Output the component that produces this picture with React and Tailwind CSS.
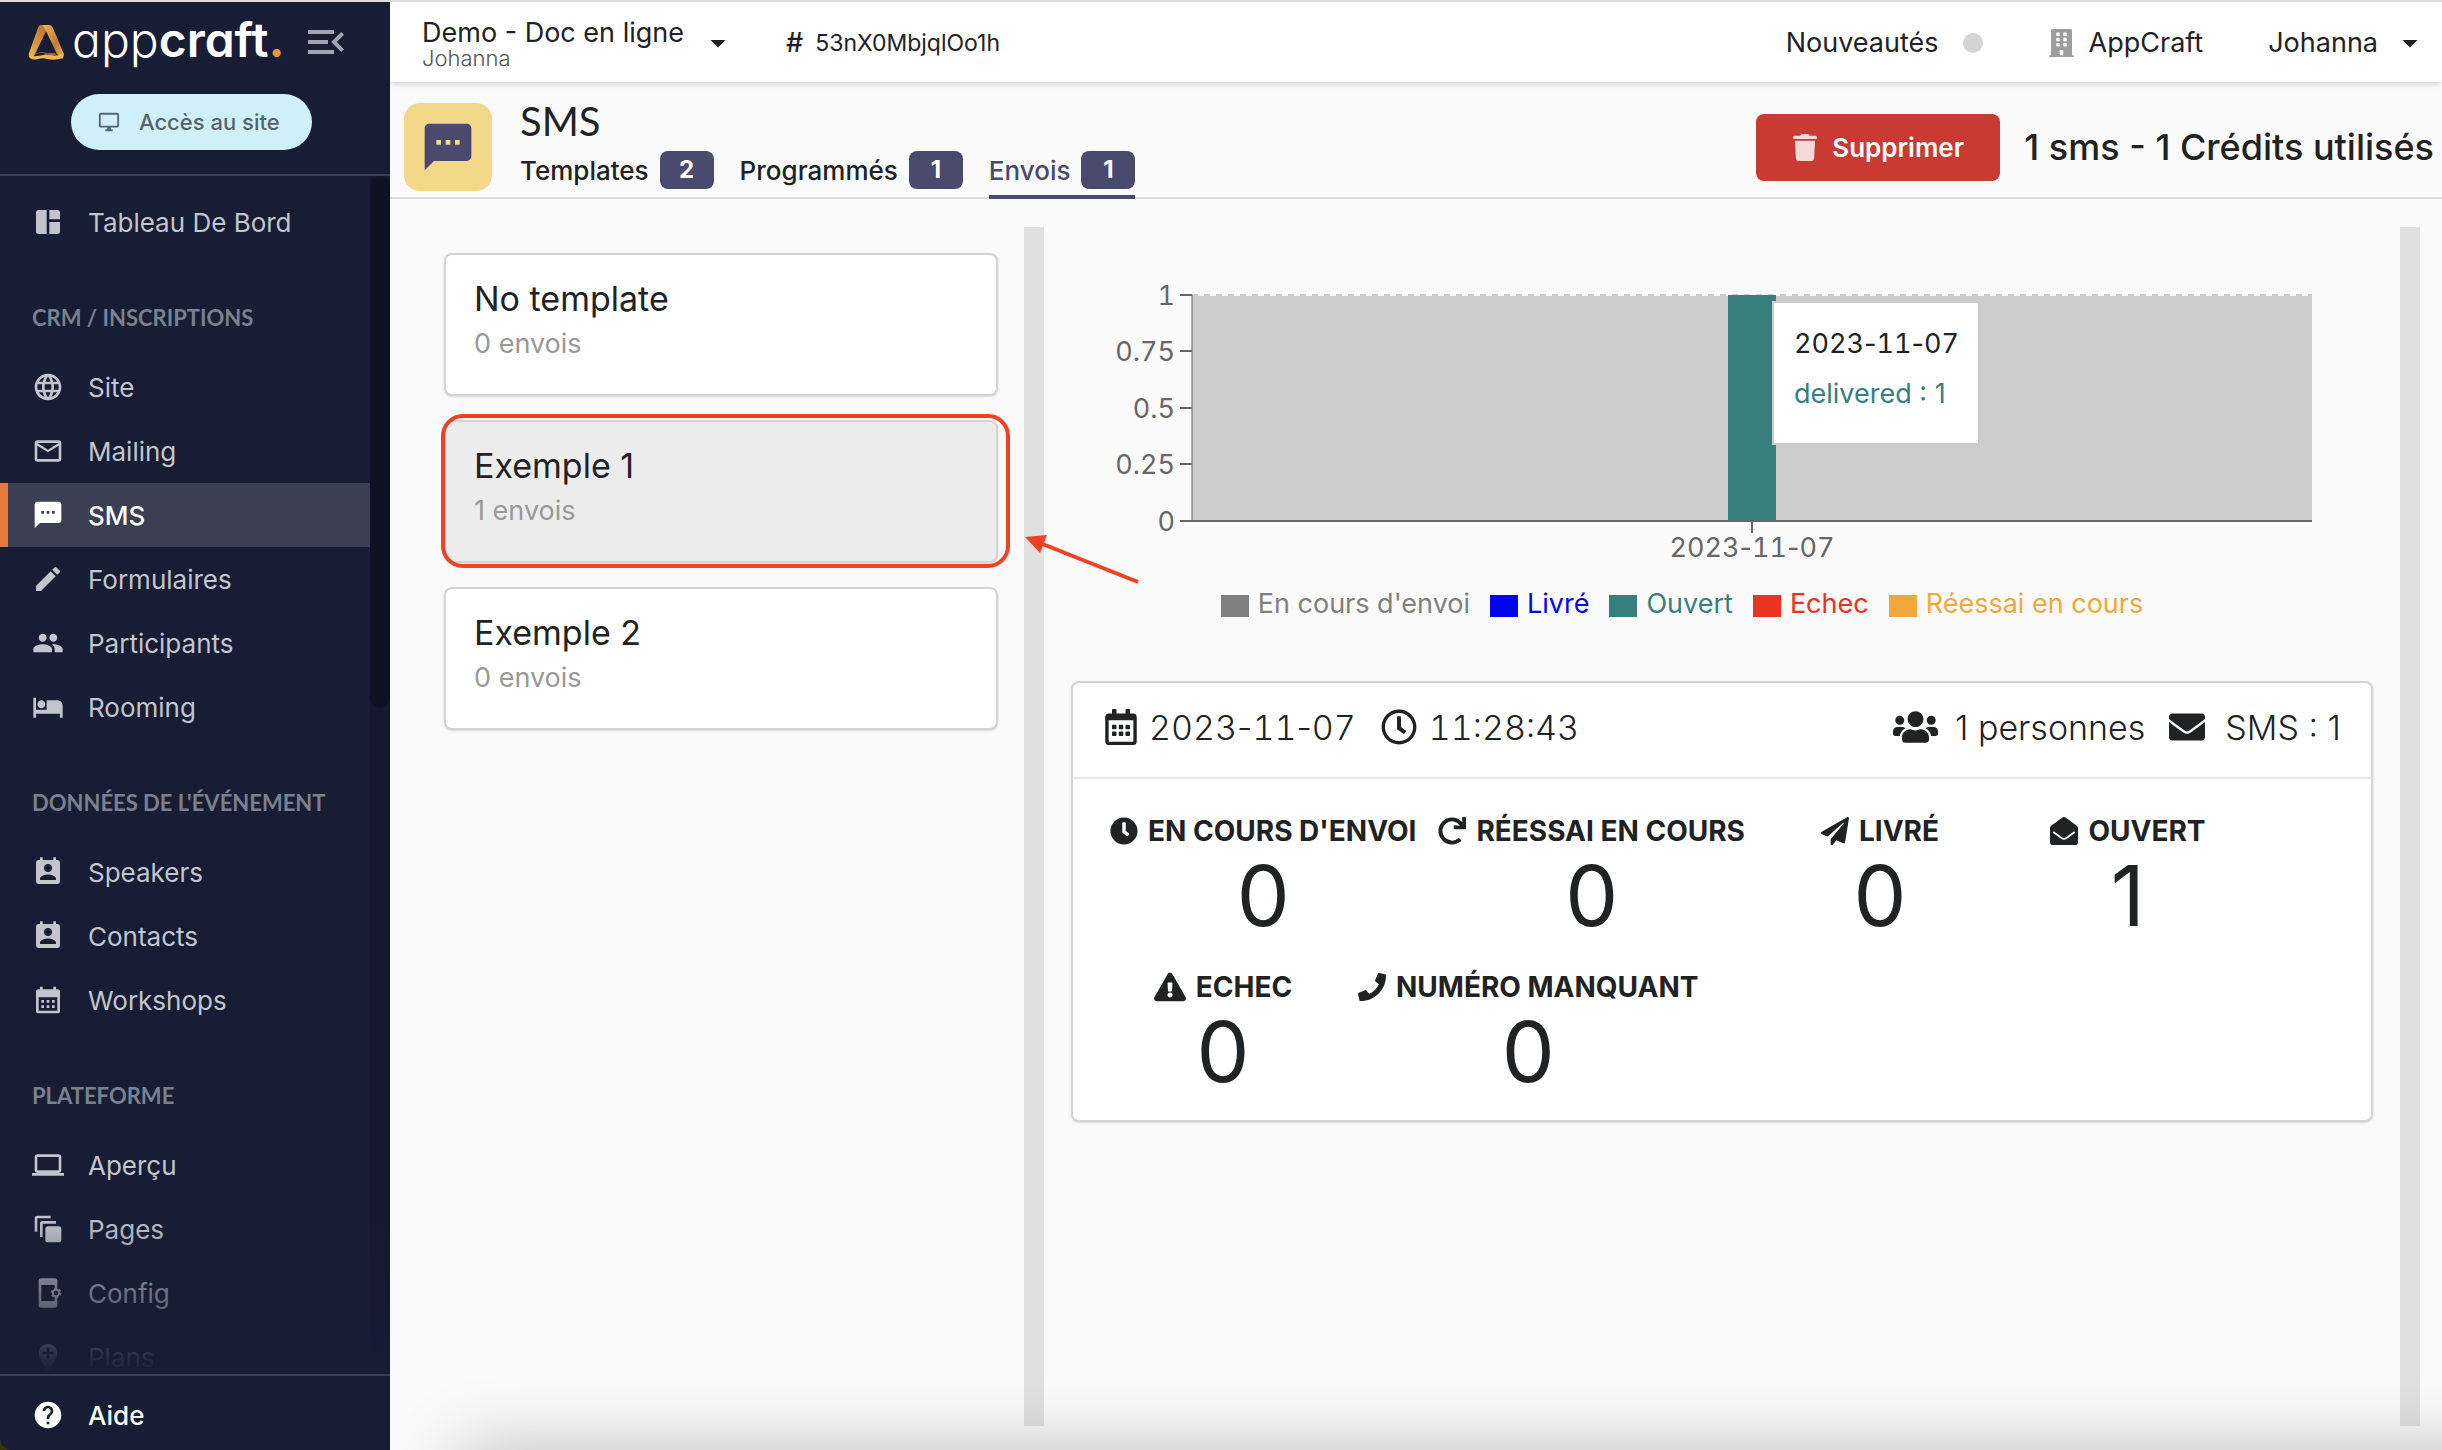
import {
  MdHotel, MdCreate, MdHelp, MdLaptop, MdMailOutline, MdMenuOpen, MdOutlineDesktopWindows,
  MdPeople, MdSms, MdLanguage, MdAddLocation, MdArrowDropDown,
} from "react-icons/md";
import {
  FaBuilding, FaClock, FaEnvelope, FaEnvelopeOpen, FaExclamationTriangle, FaPaperPlane,
  FaPhone, FaRegCalendarAlt, FaRegClock, FaTrash, FaUsers, FaRedo,
} from "react-icons/fa";

function DashboardIcon({ className }) {
  return (
    <svg viewBox="0 0 24 24" fill="currentColor" className={className}>
      <path d="M11 21H5a2 2 0 0 1-2-2V5a2 2 0 0 1 2-2h6v18zM13 21h6a2 2 0 0 0 2-2v-7h-8v9zM21 10V5a2 2 0 0 0-2-2h-6v7h8z" />
    </svg>
  );
}

function BadgeIcon({ className }) {
  return (
    <svg viewBox="0 0 24 24" fill="currentColor" fillRule="evenodd" className={className}>
      <path d="M19 3h-1V1h-2v2H8V1H6v2H5a2 2 0 0 0-2 2v14a2 2 0 0 0 2 2h14a2 2 0 0 0 2-2V5a2 2 0 0 0-2-2zm-7 3a3 3 0 1 1 0 6 3 3 0 0 1 0-6zm6 12H6v-1c0-2 4-3.100 6-3.100s6 1.100 6 3.100v1z" />
    </svg>
  );
}

function WorkshopIcon({ className }) {
  return (
    <svg viewBox="0 0 24 24" fill="currentColor" fillRule="evenodd" className={className}>
      <path d="M19 4h-1V2h-2v2H8V2H6v2H5a2 2 0 0 0-2 2v14a2 2 0 0 0 2 2h14a2 2 0 0 0 2-2V6a2 2 0 0 0-2-2zm0 16H5V10h14v10z" />
      <path d="M7 12h2v2H7zM11 12h2v2h-2zM15 12h2v2h-2zM7 16h2v2H7zM11 16h2v2h-2zM15 16h2v2h-2z" />
    </svg>
  );
}

function PagesIcon({ className }) {
  return (
    <svg viewBox="0 0 24 24" fill="currentColor" className={className}>
      <path d="M2 14V4a2 2 0 0 1 2-2h10v2H4v10zM6 18V8a2 2 0 0 1 2-2h10v2H8v10z" />
      <rect x="10" y="10" width="12" height="12" rx="2" />
    </svg>
  );
}

function ConfigIcon({ className }) {
  return (
    <svg viewBox="0 0 24 24" fill="currentColor" className={className}>
      <path d="M7 1a2 2 0 0 0-2 2v18a2 2 0 0 0 2 2h10a2 2 0 0 0 2-2v-3H7V6h12V3a2 2 0 0 0-2-2z" />
      <path d="M17 6h2v3h-2zM17 15h2v3h-2z" />
      <circle cx="18" cy="12" r="2.400" fill="none" stroke="currentColor" strokeWidth="1.500" />
      <circle cx="18" cy="12" r="3.400" fill="none" stroke="currentColor" strokeWidth="1.200" strokeDasharray="1.800 1.760" />
    </svg>
  );
}

function Logo() {
  return (
    <span className="flex items-center gap-2">
      <svg viewBox="0 0 36 36" className="h-9 w-9">
        <defs>
          <linearGradient id="leg-left" x1="1" y1="0" x2="0" y2="1">
            <stop offset="0" stopColor="#b06a2c" />
            <stop offset="1" stopColor="#f2b650" />
          </linearGradient>
          <linearGradient id="leg-right" x1="0" y1="0" x2="1" y2="1">
            <stop offset="0" stopColor="#f2b650" />
            <stop offset="0.600" stopColor="#c27c35" />
            <stop offset="1" stopColor="#f2b650" />
          </linearGradient>
        </defs>
        <path d="M13 1h8L8 28c-1 3-3 4-3 6-3 1-5-1-4-5L10 4c1-2 1-3 3-3z" fill="url(#leg-left)" />
        <path d="M14 1h7c2 0 3 1 4 3l10 24c1 3 1 5-1 7l-5-5L17 5z" fill="url(#leg-right)" />
        <path d="M1 31c1 5 5 5 9 4 3-1 6-1 9 0 5 1 11 1 15-1 2-2 2-4 1-6-3 4-7 4-11 3-3-1-6-1-9 0-5 1-10 2-14 0z" fill="#f2b650" />
        <path d="M7 31c4-3 9-3 12 0 4 0 7 1 10-1-4-2-8 0-11-1-4-2-9-1-11 2z" fill="#a8652c" />
      </svg>
      <span className="pb-1 text-[48px] leading-[50px] font-light text-white [font-feature-settings:'cv11']">
        app<span className="font-semibold">craft</span><span className="font-bold text-[#e79a35]">.</span>
      </span>
    </span>
  );
}

const sections = [
  { items: [{ label: "Tableau De Bord", icon: DashboardIcon }] },
  {
    title: "CRM / INSCRIPTIONS",
    items: [
      { label: "Site", icon: MdLanguage },
      { label: "Mailing", icon: MdMailOutline },
      { label: "SMS", icon: MdSms, active: true },
      { label: "Formulaires", icon: MdCreate },
      { label: "Participants", icon: MdPeople },
      { label: "Rooming", icon: MdHotel },
    ],
  },
  {
    title: "DONNÉES DE L'ÉVÉNEMENT",
    items: [
      { label: "Speakers", icon: BadgeIcon },
      { label: "Contacts", icon: BadgeIcon },
      { label: "Workshops", icon: WorkshopIcon },
    ],
  },
  {
    title: "PLATEFORME",
    items: [
      { label: "Aperçu", icon: MdLaptop },
      { label: "Pages", icon: PagesIcon },
      { label: "Config", icon: ConfigIcon },
      { label: "Plans", icon: MdAddLocation },
    ],
  },
];

function NavItem({ label, icon: Icon, active }) {
  return (
    <a
      href="#"
      className={
        active
          ? "flex h-16 items-center gap-6 border-l-8 border-[#e57a3a] bg-[#3a3f54] pl-6 text-[26px] font-medium text-white"
          : "flex h-16 items-center gap-6 pl-8 text-[26px] text-[#c3c5cd]"
      }
    >
      <Icon className="h-8 w-8 shrink-0" />
      {label}
    </a>
  );
}

function Sidebar() {
  return (
    <aside className="flex w-[390px] shrink-0 flex-col rounded-bl-xl bg-[#161d35]">
      <div className="flex h-[174px] shrink-0 flex-col border-b-2 border-[#3a3f54]">
        <div className="flex h-20 items-center justify-between pr-10 pl-7">
          <Logo />
          <button type="button" aria-label="Replier le menu" className="text-[#a1a5b1]">
            <MdMenuOpen className="h-12 w-12" />
          </button>
        </div>
        <button
          type="button"
          className="ml-[71px] mt-3 flex h-14 w-[241px] items-center gap-[19px] rounded-full bg-[#cff0fb] pl-[27px] text-[22px] font-medium text-[#566466]"
        >
          <MdOutlineDesktopWindows className="h-[22px] w-[22px]" />
          Accès au site
        </button>
      </div>
      <div className="relative flex min-h-0 flex-1 overflow-hidden">
        <nav className="flex-1 pt-[14px]">
          {sections.map((section) => (
            <div key={section.items[0].label}>
              {section.title && (
                <h2 className="flex h-[101px] items-center pt-[26px] pl-8 font-[Lato] text-[22px] font-bold text-[#7a808f]">
                  {section.title}
                </h2>
              )}
              {section.items.map((item) => (
                <NavItem key={item.label} {...item} />
              ))}
            </div>
          ))}
        </nav>
        <div className="w-5 bg-[#151831]">
          <div className="h-[532px] rounded-full bg-[#0d1321]" />
        </div>
        <div className="pointer-events-none absolute inset-x-0 bottom-0 h-40 bg-linear-to-b from-transparent to-[#161d35]" />
      </div>
      <a href="#" className="flex h-[76px] shrink-0 items-center gap-6 border-t-2 border-[#3a3f54] pt-1 pl-8 text-[26px] font-medium text-white">
        <MdHelp className="h-8 w-8" />
        Aide
      </a>
    </aside>
  );
}

function TopBar() {
  return (
    <header className="z-10 flex h-20 shrink-0 items-center bg-white pt-[2px] pr-[14px] pl-8 text-[27px] shadow-md">
      <button type="button" className="flex items-center gap-4 text-left">
        <span className="flex flex-col">
          <span className="leading-[30px]">Demo - Doc en ligne</span>
          <span className="text-[22px] leading-[20px] font-light text-[#555]">Johanna</span>
        </span>
        <MdArrowDropDown className="h-9 w-9" />
      </button>
      <p className="ml-[50px] flex items-center gap-3 text-[23px]">
        <span className="text-[27px] font-medium">#</span>53nX0MbjqlOo1h
      </p>
      <nav className="ml-auto flex items-center">
        <a href="#" className="flex items-center gap-6">
          Nouveautés
          <span className="h-5 w-5 rounded-full bg-[#d4d4d4]" />
        </a>
        <a href="#" className="ml-[66px] flex items-center gap-[15px]">
          <FaBuilding className="h-7 w-[25px] text-[#9d9d9d]" />
          AppCraft
        </a>
        <button type="button" className="ml-[65px] flex items-center gap-[14px]">
          Johanna
          <MdArrowDropDown className="h-9 w-9" />
        </button>
      </nav>
    </header>
  );
}

const tabs = [
  { label: "Templates", count: 2 },
  { label: "Programmés", count: 1 },
  { label: "Envois", count: 1, active: true },
];

function PageHeader() {
  return (
    <div className="flex h-[117px] shrink-0 items-center border-b-2 border-[#dcdcdc] pt-[15px] pr-2 pl-[14px]">
      <span className="grid h-[88px] w-[88px] place-items-center rounded-2xl bg-[#f3d88a]">
        <MdSms className="h-14 w-14 text-[#4a4a6e]" />
      </span>
      <div className="ml-7 flex h-full flex-col">
        <h1 className="font-[Lato] text-[40px] leading-[48px]">SMS</h1>
        <nav className="flex flex-1 gap-[26px]">
          {tabs.map((tab) => (
            <a
              key={tab.label}
              href="#"
              className={
                tab.active
                  ? "-mb-[2px] flex items-center gap-[11px] border-b-4 border-[#4a4a6e] text-[26px] font-medium text-[#4a4a6e]"
                  : "-mb-[2px] flex items-center gap-[11px] border-b-4 border-transparent text-[26px] font-medium"
              }
            >
              {tab.label}
              <span className="grid h-[38px] w-[54px] place-items-center rounded-lg bg-[#4a4a6e] text-2xl font-bold text-white">
                {tab.count}
              </span>
            </a>
          ))}
        </nav>
      </div>
      <button
        type="button"
        className="ml-auto flex h-[67px] w-[244px] items-center gap-[15px] rounded-lg bg-[#c93a33] pl-[37px] text-[26px] font-semibold text-white"
      >
        <FaTrash className="h-[27px] w-6 text-[#f4dad6]" />
        Supprimer
      </button>
      <p className="ml-6 text-[36px] font-medium whitespace-nowrap">1 sms - 1 Crédits utilisés</p>
    </div>
  );
}

const templates = [
  { name: "No template", count: 0 },
  { name: "Exemple 1", count: 1, selected: true },
  { name: "Exemple 2", count: 0 },
];

function TemplateList() {
  return (
    <ul className="flex flex-1 flex-col gap-6 pt-[26px] pr-[26px]">
      {templates.map((template) => (
        <li key={template.name} className="relative">
          <button
            type="button"
            className={
              template.selected
                ? "flex h-[143px] w-full flex-col rounded-lg border-2 border-[#d4d4d4] bg-[#ececec] px-7 pt-[22px] text-left shadow-sm"
                : "flex h-[143px] w-full flex-col rounded-lg border-2 border-[#d4d4d4] bg-white px-7 pt-[22px] text-left shadow-sm"
            }
          >
            <span className="text-[34px] leading-[44px]">{template.name}</span>
            <span className="text-[27px] leading-[46px] text-[#999]">{template.count} envois</span>
          </button>
          {template.selected && (
            <>
              <span className="pointer-events-none absolute -top-[6px] -right-3 -bottom-[5px] -left-[3px] rounded-[22px] border-4 border-[#ef4123]" />
              <svg viewBox="0 0 120 54" fill="#ef4123" className="absolute top-[112px] left-full z-10 ml-[26px] h-[54px] w-[120px]">
                <path d="M1 5l22-2-7 18z" />
                <path d="M16 11L114 50" stroke="#ef4123" strokeWidth="4" />
              </svg>
            </>
          )}
        </li>
      ))}
    </ul>
  );
}

// Digits are tabular, the dashes between them keep their own width
function DateDigits({ value, as: Tag = "span" }) {
  const [year, month, day] = value.split("-");
  return (
    <>
      {year}
      <Tag className="normal-nums">-</Tag>
      {month}
      <Tag className="normal-nums">-</Tag>
      {day}
    </>
  );
}

const yTicks = [
  { label: "1", y: 31 },
  { label: "0.75", y: 87 },
  { label: "0.5", y: 144 },
  { label: "0.25", y: 200 },
  { label: "0", y: 257 },
];

const legend = [
  { label: "En cours d'envoi", swatch: "bg-[#808080]", text: "text-[#808080]" },
  { label: "Livré", swatch: "bg-[#0000f5]", text: "text-[#0000f5]" },
  { label: "Ouvert", swatch: "bg-[#377f7c]", text: "text-[#377f7c]" },
  { label: "Echec", swatch: "bg-[#ea3323]", text: "text-[#ea3323]" },
  { label: "Réessai en cours", swatch: "bg-[#f1a83a]", text: "text-[#f1a83a]" },
];

function SendingChart() {
  return (
    <section className="relative pt-[37px]">
      <svg viewBox="0 0 1302 302" className="w-full text-[27px] tabular-nums" fill="#666">
        <rect x="121" y="32" width="1120" height="225" fill="#ccc" />
        <path d="M121 31H1241" stroke="#ccc" strokeWidth="2" strokeDasharray="6 6" />
        <rect x="657" y="31" width="48" height="226" fill="#377f7c" />
        <path d="M121 31V257" stroke="#666" />
        <path d="M109 257H1241" stroke="#666" strokeWidth="2" />
        <path d="M681 257V269" stroke="#666" strokeWidth="2" />
        {yTicks.map((tick) => (
          <g key={tick.label}>
            <path d={`M109 ${tick.y}h12`} stroke="#666" strokeWidth="2" />
            <text x="104" y={tick.y + 10} textAnchor="end">{tick.label}</text>
          </g>
        ))}
        <text x="681" y="293" textAnchor="middle">
          <DateDigits value="2023-11-07" as="tspan" />
        </text>
      </svg>
      <div className="absolute top-[74px] left-[701px] h-[144px] w-[208px] border-2 border-[#ccc] bg-white pt-4 pl-5 text-[27px] leading-[50px] whitespace-nowrap">
        <p className="tabular-nums">
          <DateDigits value="2023-11-07" />
        </p>
        <p className="text-[#377f7c]">delivered : 1</p>
      </div>
      <ul className="flex justify-center gap-5 pt-[19px] pr-20 text-[27px] leading-[38px]">
        {legend.map((entry) => (
          <li key={entry.label} className={`flex items-center gap-[9px] ${entry.text}`}>
            <span className={`mt-1 h-[22px] w-7 ${entry.swatch}`} />
            {entry.label}
          </li>
        ))}
      </ul>
    </section>
  );
}

const stats = [
  { label: "EN COURS D'ENVOI", value: 0, icon: FaClock },
  { label: "RÉESSAI EN COURS", value: 0, icon: FaRedo },
  { label: "LIVRÉ", value: 0, icon: FaPaperPlane },
  { label: "OUVERT", value: 1, icon: FaEnvelopeOpen },
  { label: "ECHEC", value: 0, icon: FaExclamationTriangle, wide: true },
  { label: "NUMÉRO MANQUANT", value: 0, icon: FaPhone },
];

function SendingCard() {
  return (
    <section className="mt-[58px] h-[441px] rounded-lg border-2 border-[#d4d4d4] bg-white shadow-sm">
      <div className="flex h-24 items-center border-b-2 border-[#e8e8e8] pr-[30px] pb-[6px] pl-8 text-[34px] font-light">
        <FaRegCalendarAlt className="h-9 w-8" />
        <span className="ml-3 tabular-nums">
          <DateDigits value="2023-11-07" />
        </span>
        <FaRegClock className="ml-[25px] h-9 w-9" />
        <span className="ml-3 tabular-nums">11:28:43</span>
        <FaUsers className="ml-auto h-9 w-[45px]" />
        <span className="ml-[17px]">1 personnes</span>
        <FaEnvelope className="ml-6 h-9 w-9" />
        <span className="ml-5">SMS : 1</span>
      </div>
      <dl className="flex flex-wrap px-[26px] pt-8">
        {stats.map(({ label, value, icon: Icon, wide }) => (
          <div key={label} className="flex h-[156px] min-w-[248px] flex-col items-center px-[11px]">
            <dt className="flex items-center gap-[10px] text-[28px] leading-10 font-bold">
              <Icon className={wide ? "h-8 w-8" : "h-7 w-7"} />
              {label}
            </dt>
            <dd className="text-[84px] leading-[90px]">{value}</dd>
          </div>
        ))}
      </dl>
    </section>
  );
}

export default function App() {
  return (
    <div className="flex h-screen border-t-2 border-[#dcdcdc] bg-[#3d3211] font-[Inter,sans-serif] text-[#212223]">
      <Sidebar />
      <div className="relative flex min-w-0 flex-1 flex-col overflow-hidden bg-[#fafafa]">
        <TopBar />
        <PageHeader />
        <main className="flex min-h-0 flex-1 pt-7 pr-[22px] pb-6 pl-[54px]">
          <div className="flex w-[600px] shrink-0">
            <TemplateList />
            <div className="w-5 bg-[#e0e0e0]" />
          </div>
          <div className="flex min-w-0 flex-1">
            <div className="min-w-0 flex-1 pr-[27px] pl-[27px]">
              <SendingChart />
              <SendingCard />
            </div>
            <div className="w-5 bg-[#e0e0e0]" />
          </div>
        </main>
        <div className="pointer-events-none absolute -right-24 -bottom-20 left-[70px] h-20 shadow-[0_0_70px_rgba(0,0,0,0.25)]" />
      </div>
    </div>
  );
}
